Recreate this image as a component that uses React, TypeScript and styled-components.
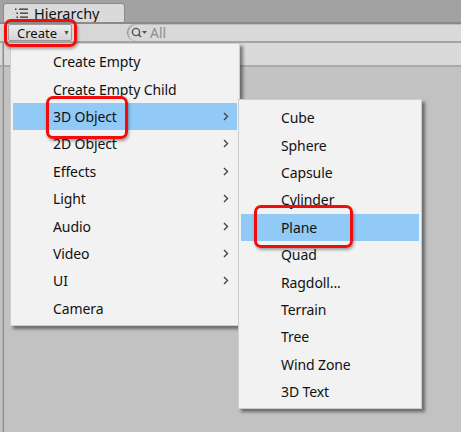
import React from "react";
import styled, { createGlobalStyle } from "styled-components";

const GlobalStyle = createGlobalStyle`
  html, body { margin: 0; padding: 0; background: #c2c2c2; }
  * { box-sizing: border-box; }
`;

const Window = styled.div`
  position: relative;
  width: 461px;
  height: 432px;
  overflow: hidden;
  display: flex;
  flex-direction: column;
  font-family: "Noto Sans", "Open Sans", sans-serif;
  background: #c2c2c2;
`;

const TabBar = styled.div`
  height: 22px;
  background: #a2a2a2;
  display: flex;
  align-items: flex-end;
  padding-left: 3px;
`;

const Tab = styled.div`
  width: 122px;
  height: 19px;
  background: #dadada;
  border: 1px solid #8c8c8c;
  border-bottom: none;
  border-radius: 3px 3px 0 0;
  display: flex;
  align-items: center;
  gap: 5px;
  padding-left: 11px;
  font-size: 14.5px;
  color: #111;
`;

const Toolbar = styled.div`
  height: 21px;
  background: #d7d7d7;
  border-top: 2px solid #8a8a8a;
  border-bottom: 2px solid #a5a5a5;
  display: flex;
  align-items: center;
  padding-left: 8px;
`;

const CreateButton = styled.div`
  width: 64px;
  height: 17px;
  background: linear-gradient(#ececec, #d4d4d4);
  border: 1px solid #9a9a9a;
  border-radius: 2px;
  display: flex;
  align-items: center;
  padding-left: 8px;
  gap: 6px;
  font-size: 13px;
  color: #111;
`;

const Caret = styled.span`
  font-size: 7px;
  color: #555;
`;

const SearchField = styled.div`
  margin-left: 55px;
  flex: 1;
  align-self: stretch;
  background: #d9d9d9;
  border-left: 1px solid #8f8f8f;
  border-radius: 9px 0 0 9px;
  box-shadow: inset 1px 1px 0 #bdbdbd;
  display: flex;
  align-items: center;
  padding-left: 3px;
  gap: 1px;
  font-size: 14px;
  color: #8e8e8e;
`;

const SceneRow = styled.div`
  height: 24px;
  background: #dadada;
  border-bottom: 2px solid #a9a9a9;
`;

const Panel = styled.div`
  flex: 1;
  background: #c2c2c2;
`;

const EdgeLine = styled.div`
  position: absolute;
  left: 2px;
  top: 42px;
  bottom: 0;
  width: 2px;
  background: #8f8f8f;
  border-left: 1px solid #b0b0b0;
`;

const Menu = styled.div<{ $left: number; $top: number; $width: number }>`
  position: absolute;
  left: ${(p) => p.$left}px;
  top: ${(p) => p.$top}px;
  width: ${(p) => p.$width}px;
  background: #f2f2f2;
  border: 1px solid #cdcdcd;
  box-shadow: 3px 3px 3px rgba(0, 0, 0, 0.45);
  padding: 4px 2px 3px 2px;
  display: flex;
  flex-direction: column;
`;

const Item = styled.div<{ $active?: boolean }>`
  height: 27.4px;
  display: flex;
  align-items: center;
  justify-content: space-between;
  padding-left: 40px;
  padding-right: 8px;
  background: ${(p) => (p.$active ? "#91c9f7" : "transparent")};
  font-size: 14px;
  color: #111;
  letter-spacing: -0.1px;
`;

const Callout = styled.div<{ $x: number; $y: number; $w: number; $h: number }>`
  position: absolute;
  left: ${(p) => p.$x}px;
  top: ${(p) => p.$y}px;
  width: ${(p) => p.$w}px;
  height: ${(p) => p.$h}px;
  border: 3px solid #f20d0d;
  border-radius: 7px;
  box-shadow: 1px 2px 3px rgba(0, 0, 0, 0.35);
  pointer-events: none;
`;

const HierarchyIcon = () => (
  <svg width="14" height="11" viewBox="0 0 14 11">
    <g fill="#333">
      <rect x="0" y="0.5" width="1.5" height="1.5" />
      <rect x="4" y="0.5" width="9" height="1.3" />
      <rect x="1.5" y="4.5" width="1.5" height="1.5" />
      <rect x="5" y="4.5" width="8" height="1.3" />
      <rect x="1.5" y="8.5" width="1.5" height="1.5" />
      <rect x="5" y="8.5" width="8" height="1.3" />
    </g>
  </svg>
);

const SearchIcon = () => (
  <svg width="18" height="11" viewBox="0 0 18 11">
    <circle cx="5" cy="5" r="3.6" fill="none" stroke="#555" strokeWidth="1.4" />
    <line x1="7.6" y1="7.6" x2="10" y2="10" stroke="#555" strokeWidth="1.6" />
    <polygon points="11,4 16,4 13.5,7" fill="#555" />
  </svg>
);

const Chevron = () => (
  <svg width="6" height="9" viewBox="0 0 6 9">
    <polyline points="1,1 4.5,4.5 1,8" fill="none" stroke="#444" strokeWidth="1.4" />
  </svg>
);

const mainItems: { label: string; sub?: boolean; active?: boolean }[] = [
  { label: "Create Empty" },
  { label: "Create Empty Child" },
  { label: "3D Object", sub: true, active: true },
  { label: "2D Object", sub: true },
  { label: "Effects", sub: true },
  { label: "Light", sub: true },
  { label: "Audio", sub: true },
  { label: "Video", sub: true },
  { label: "UI", sub: true },
  { label: "Camera" },
];

const subItems = [
  "Cube",
  "Sphere",
  "Capsule",
  "Cylinder",
  "Plane",
  "Quad",
  "Ragdoll...",
  "Terrain",
  "Tree",
  "Wind Zone",
  "3D Text",
];

export default function App() {
  return (
    <>
      <GlobalStyle />
      <Window>
        <TabBar>
          <Tab>
            <HierarchyIcon />
            <span>Hierarchy</span>
          </Tab>
        </TabBar>
        <Toolbar>
          <CreateButton>
            <span>Create</span>
            <Caret>▼</Caret>
          </CreateButton>
          <SearchField>
            <SearchIcon />
            <span>All</span>
          </SearchField>
        </Toolbar>
        <SceneRow />
        <Panel />
        <EdgeLine />

        <Menu $left={10} $top={43} $width={230}>
          {mainItems.map((it) => (
            <Item key={it.label} $active={it.active}>
              <span>{it.label}</span>
              {it.sub && <Chevron />}
            </Item>
          ))}
        </Menu>

        <Menu $left={238} $top={99} $width={184}>
          {subItems.map((s) => (
            <Item key={s} $active={s === "Plane"}>
              <span>{s}</span>
            </Item>
          ))}
        </Menu>

        <Callout $x={4} $y={19} $w={73} $h={28} />
        <Callout $x={46} $y={96} $w={82} $h={43} />
        <Callout $x={254} $y={205} $w={99} $h={43} />
      </Window>
    </>
  );
}
